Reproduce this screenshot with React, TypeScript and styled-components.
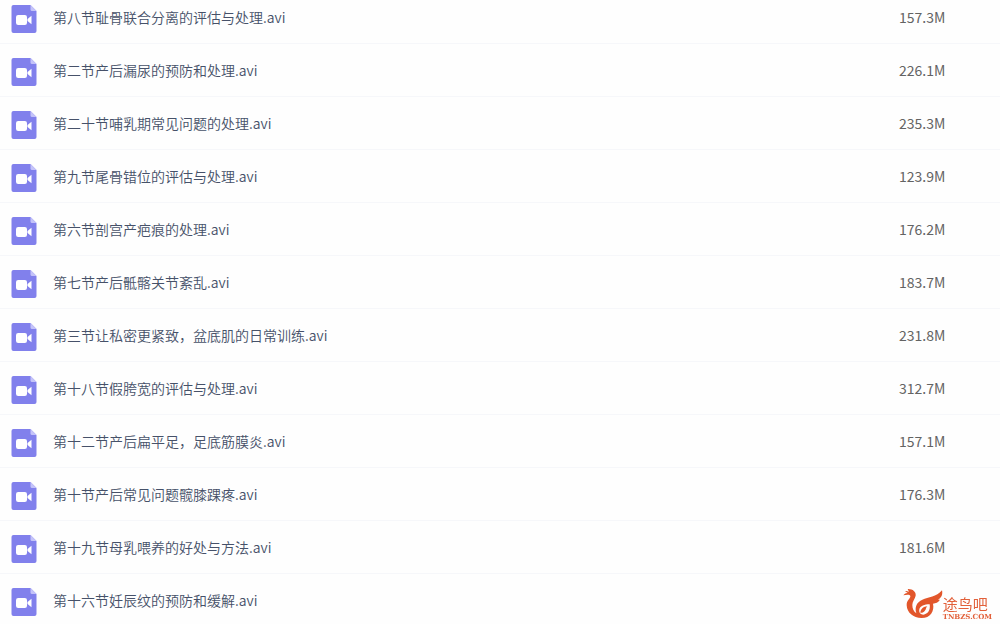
import React from "react";
import styled, { createGlobalStyle } from "styled-components";

const GlobalStyle = createGlobalStyle`
  * { box-sizing: border-box; }
  body {
    margin: 0;
    background: #fefefe;
    font-family: "Noto Sans CJK SC", sans-serif;
    font-size: 14px;
    line-height: 20px;
  }
`;

const List = styled.ul`
  margin: 0;
  padding: 0;
  list-style: none;
`;

const Row = styled.li<{ $first?: boolean }>`
  display: flex;
  align-items: flex-start;
  gap: 16px;
  padding: ${(p) => (p.$first ? 5 : 14)}px 0 10px 11px;
  border-bottom: 1px solid #f6f7fa;
  &:last-child { border-bottom-color: transparent; }
`;

const FileName = styled.span`
  flex: 1;
  padding-top: 2px;
  color: #465169;
  font-weight: 350;
`;

const FileSize = styled.span`
  width: 101px;
  padding-top: 2px;
  color: #636363;
`;

const Watermark = styled.aside`
  position: fixed;
  right: 8px;
  bottom: 2px;
  display: flex;
  align-items: flex-end;
  color: #e2603a;
`;

const Brand = styled.div`
  display: flex;
  flex-direction: column;
  padding-bottom: 1px;
`;

const BrandName = styled.span`
  font-size: 15px;
  line-height: 18px;
`;

const BrandSite = styled.span`
  font: bold 7px/8px "DejaVu Serif", serif;
`;

const files = [
  ["第八节耻骨联合分离的评估与处理.avi", "157.3M"],
  ["第二节产后漏尿的预防和处理.avi", "226.1M"],
  ["第二十节哺乳期常见问题的处理.avi", "235.3M"],
  ["第九节尾骨错位的评估与处理.avi", "123.9M"],
  ["第六节剖宫产疤痕的处理.avi", "176.2M"],
  ["第七节产后骶髂关节紊乱.avi", "183.7M"],
  ["第三节让私密更紧致，盆底肌的日常训练.avi", "231.8M"],
  ["第十八节假胯宽的评估与处理.avi", "312.7M"],
  ["第十二节产后扁平足，足底筋膜炎.avi", "157.1M"],
  ["第十节产后常见问题髋膝踝疼.avi", "176.3M"],
  ["第十九节母乳喂养的好处与方法.avi", "181.6M"],
  ["第十六节妊辰纹的预防和缓解.avi", ""],
];

const VideoIcon = () => (
  <svg width="26" height="28" viewBox="0 0 26 28" aria-hidden="true">
    <path d="M2.5 0H19.5L25.5 6V26Q25.5 28 23.5 28H2.5Q.5 28 .5 26V2Q.5 0 2.5 0Z" fill="#8180ec" />
    <path d="M19.5 0L25.5 6H21Q19.5 6 19.5 4.5Z" fill="#c4c3f9" />
    <rect x="5" y="10" width="11" height="10" rx="2.2" fill="#fff" />
    <path d="M16.5 14L20.5 10.8V19.2L16.5 16Z" fill="#fff" />
  </svg>
);

const BirdLogo = () => (
  <svg width="42" height="36" viewBox="0 0 126 108" fill="#e2562b" aria-hidden="true">
    <path d="M7 28C12 22 16 20 20 21L12 15C18 15 21 16 24 18L20 9C34 8 46 17 44 29C42 39 34 46 34 57C34 68 38 76 46 82C40 62 48 48 64 41C82 33 106 34 123 13C126 26 121 36 111 41L117 41C112 49 104 52 96 53C101 75 88 96 62 96C36 96 18 80 17 58C16 42 29 38 28 30C27 25 16 26 7 28ZM86 55C70 55 58 60 55 70C53 80 59 86 67 86C80 85 89 72 86 55Z" fillRule="evenodd" />
    <path d="M58 80C59 68 68 62 79 61C74 65 76 70 71 75C68 79 63 81 58 80Z" />
  </svg>
);

export default function App() {
  return (
    <main>
      <GlobalStyle />
      <List>
        {files.map(([name, size], i) => (
          <Row key={name} $first={i === 0}>
            <VideoIcon />
            <FileName>{name}</FileName>
            {size && <FileSize>{size}</FileSize>}
          </Row>
        ))}
      </List>
      <Watermark>
        <BirdLogo />
        <Brand>
          <BrandName>途鸟吧</BrandName>
          <BrandSite>TNBZS.COM</BrandSite>
        </Brand>
      </Watermark>
    </main>
  );
}
